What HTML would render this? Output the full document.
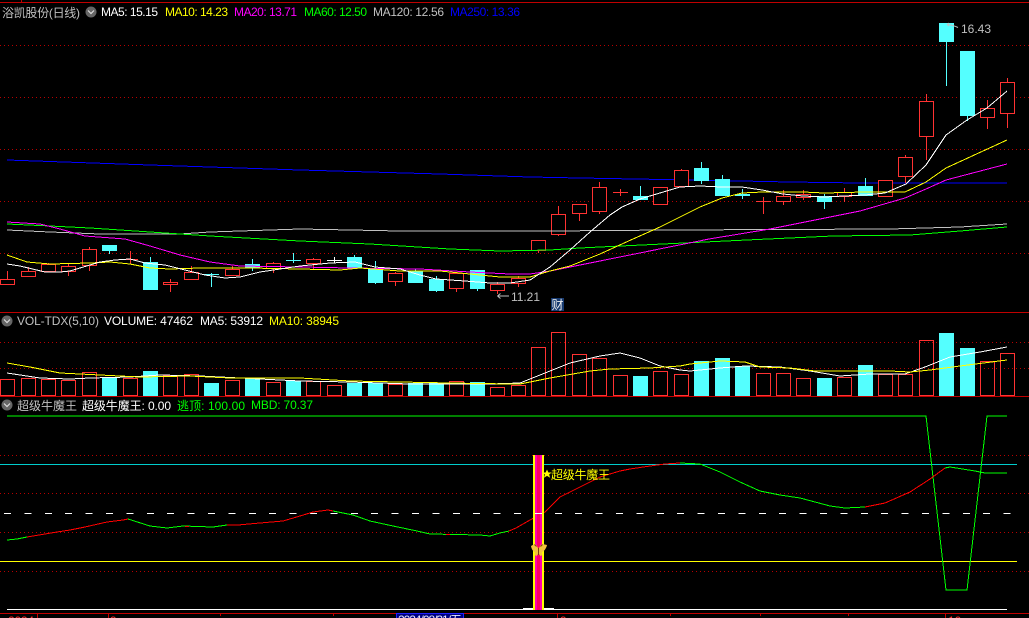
<!DOCTYPE html>
<html><head><meta charset="utf-8"><title>K</title>
<style>
html,body{margin:0;padding:0;background:#000;width:1029px;height:618px;overflow:hidden}
svg{position:absolute;left:0;top:0;display:block}
text{font-family:"Liberation Sans","WenQuanYi Zen Hei","Noto Sans CJK SC",sans-serif;font-size:12px}
</style></head><body>
<svg width="1029" height="618" viewBox="0 0 1029 618" xmlns="http://www.w3.org/2000/svg">
<rect width="1029" height="618" fill="#000"/>
<g shape-rendering="crispEdges" fill="none">
<!-- frame -->
<path d="M0 2.5H1029M21.5 0V2M0 312.5H1029M0 396.5H1029M0 613.5H1029" stroke="#c00000"/>
<path d="M37.5 613V618M108.5 613V618M557.5 613V618M945.5 613V618M220.5 613V616M333.5 613V616M670.5 613V616M760.5 613V616M848.5 613V616" stroke="#c00000"/>
<path d="M0 45.5H1029M0 97.5H1029M0 149.5H1029M0 201.5H1029M0 253.5H1029M0 342.5H1029M0 368.5H1029M0 455.5H1029M0 493.5H1029M0 532.5H1029M0 571.5H1029" stroke="#b80000" stroke-dasharray="1 3"/>
<!-- blue MA250 -->
<polyline stroke="#0000ff" points="7,160 150,165 300,170 440,174 530,177 580,178 690,180 790,182 860,183 1007,183"/>
<!-- red wicks -->
<path stroke="#ff3232" d="M7.5 271V285M28.5 267V277M48.5 263V272M68.5 263V276M89.5 247V271M130.5 251V264M170.5 279V292M191.5 266V280M232.5 266V276M273.5 262V273M313.5 258V269M395.5 272V286M456.5 273V292M497.5 282V294M518.5 276V287M538.5 240V253M558.5 206V236M579.5 204V221M599.5 182V214M620.5 189V196M660.5 187V205M681.5 169V187M763.5 197V214M783.5 190V205M803.5 190V200M844.5 188V202M885.5 180V197M905.5 155V183M926.5 94V160M987.5 100V129M1007.5 78V128"/>
<path stroke="#ff3232" d="M123 259.5H138M163 282.5H178M613 192.5H628M756 201.5H771"/>
<!-- cyan wicks -->
<path stroke="#54ffff" d="M109.5 245V254M150.5 257V290M211.5 273V287M252.5 259V271M293.5 253V263M354.5 255V268M375.5 261V284M415.5 269V283M436.5 276V292M477.5 270V291M640.5 186V200M701.5 162V184M722.5 175V196M742.5 189V199M824.5 194V209M865.5 178V196M946.5 23V86M967.5 51V121"/>
<path stroke="#54ffff" d="M204 274.5H219M286 260.5H301M735 194.5H750"/>
<path stroke="#ffffff" d="M327 260.5H342M334.5 257V263"/>
<!-- red bodies -->
<g stroke="#ff3232" fill="#000">
<rect x="0.5" y="279.5" width="14" height="5"/><rect x="21.5" y="271.5" width="14" height="5"/><rect x="41.5" y="264.5" width="14" height="7"/><rect x="61.5" y="266.5" width="14" height="5"/><rect x="82.5" y="249.5" width="14" height="16"/><rect x="163.5" y="282.5" width="14" height="2"/><rect x="184.5" y="272.5" width="14" height="7"/><rect x="225.5" y="269.5" width="14" height="6"/><rect x="266.5" y="263.5" width="14" height="5"/><rect x="306.5" y="259.5" width="14" height="4"/><rect x="388.5" y="273.5" width="14" height="8"/><rect x="449.5" y="273.5" width="14" height="15"/><rect x="490.5" y="284.5" width="14" height="6"/><rect x="511.5" y="278.5" width="14" height="5"/><rect x="531.5" y="240.5" width="14" height="10"/><rect x="551.5" y="214.5" width="14" height="20"/><rect x="572.5" y="204.5" width="14" height="9"/><rect x="592.5" y="187.5" width="14" height="24"/><rect x="653.5" y="187.5" width="14" height="17"/><rect x="674.5" y="170.5" width="14" height="16"/><rect x="776.5" y="196.5" width="14" height="5"/><rect x="796.5" y="194.5" width="14" height="3"/><rect x="837.5" y="192.5" width="14" height="4"/><rect x="878.5" y="180.5" width="14" height="16"/><rect x="898.5" y="157.5" width="14" height="19"/><rect x="919.5" y="101.5" width="14" height="35"/><rect x="980.5" y="108.5" width="14" height="9"/><rect x="1000.5" y="82.5" width="14" height="31"/>
</g>
<!-- cyan bodies -->
<g fill="#54ffff">
<rect x="102" y="245" width="15" height="6"/><rect x="143" y="262" width="15" height="28"/><rect x="245" y="264" width="15" height="4"/><rect x="347" y="257" width="15" height="11"/><rect x="368" y="269" width="15" height="14"/><rect x="408" y="271" width="15" height="12"/><rect x="429" y="279" width="15" height="12"/><rect x="470" y="270" width="15" height="19"/><rect x="633" y="196" width="15" height="4"/><rect x="694" y="168" width="15" height="13"/><rect x="715" y="179" width="15" height="17"/><rect x="735" y="194" width="15" height="2"/><rect x="817" y="196" width="15" height="6"/><rect x="858" y="186" width="15" height="10"/><rect x="939" y="23" width="15" height="19"/><rect x="960" y="51" width="15" height="65"/>
</g>
<!-- MAs -->
<polyline stroke="#c0c0c0" points="7,230 50,232 100,234 150,234 180,234 210,232 300,229 400,231 510,231 550,231 670,230 890,229 960,227 1007,224"/>
<polyline stroke="#00ff00" points="7,224 50,226 90,228 150,232 210,236 300,241 370,244 450,249 500,251 550,250 580,248 600,247 768,239 833,236 910,235 960,231 1007,227"/>
<polyline stroke="#ff00ff" points="7,222 40,224 60,229 85,236 125,239 150,246 180,255 210,262 240,266 300,267 350,268 420,269 470,272 510,274 530,274 550,271 600,261 709,239 770,229 860,211 905,198 926,189 946,180 1007,164"/>
<polyline stroke="#ffff00" points="7,255 27,262 50,264 90,263 110,262 130,264 150,268 170,269 200,268 250,268 300,269 340,270 360,268 400,271 440,271 470,274 500,277 530,277 550,271 570,266 600,254 633,239 660,227 700,207 722,198 742,193 763,192 803,192 824,193 865,192 905,192 926,182 946,168 1007,140"/>
<polyline stroke="#ffffff" points="7,264 20,266 45,272 60,272 70,271 90,265 100,262 115,260 130,259 145,263 165,265 185,270 205,275 225,278 240,277 260,272 280,269 300,266 330,263 355,262 375,267 400,269 420,275 436,279 465,281 490,283 510,283 530,280 550,267 570,250 590,232 610,215 622,207 640,199 660,193 680,187 700,186 722,187 742,187 762,190 783,194 803,196 824,197 844,196 865,195 885,193 906,184 926,165 946,135 967,120 987,108 1007,91"/>
<!-- Volume bars -->
<g stroke="#ff3232">
<rect x="0.5" y="379.5" width="14" height="16"/><rect x="21.5" y="378.5" width="14" height="17"/><rect x="41.5" y="379.5" width="14" height="16"/><rect x="61.5" y="380.5" width="14" height="15"/><rect x="82.5" y="372.5" width="14" height="23"/><rect x="123.5" y="378.5" width="14" height="17"/><rect x="163.5" y="375.5" width="14" height="20"/><rect x="184.5" y="374.5" width="14" height="21"/><rect x="225.5" y="380.5" width="14" height="15"/><rect x="266.5" y="382.5" width="14" height="13"/><rect x="306.5" y="381.5" width="14" height="14"/><rect x="327.5" y="385.5" width="14" height="10"/><rect x="388.5" y="384.5" width="14" height="11"/><rect x="449.5" y="381.5" width="14" height="14"/><rect x="490.5" y="387.5" width="14" height="8"/><rect x="511.5" y="385.5" width="14" height="10"/><rect x="531.5" y="347.5" width="14" height="48"/><rect x="551.5" y="332.5" width="14" height="63"/><rect x="572.5" y="354.5" width="14" height="41"/><rect x="592.5" y="358.5" width="14" height="37"/><rect x="613.5" y="375.5" width="14" height="20"/><rect x="653.5" y="371.5" width="14" height="24"/><rect x="674.5" y="374.5" width="14" height="21"/><rect x="756.5" y="373.5" width="14" height="22"/><rect x="776.5" y="373.5" width="14" height="22"/><rect x="796.5" y="378.5" width="14" height="17"/><rect x="837.5" y="377.5" width="14" height="18"/><rect x="878.5" y="374.5" width="14" height="21"/><rect x="898.5" y="374.5" width="14" height="21"/><rect x="919.5" y="340.5" width="14" height="55"/><rect x="980.5" y="361.5" width="14" height="34"/><rect x="1000.5" y="353.5" width="14" height="42"/>
</g>
<g fill="#54ffff">
<rect x="102" y="377" width="15" height="19"/><rect x="143" y="371" width="15" height="25"/><rect x="204" y="383" width="15" height="13"/><rect x="245" y="378" width="15" height="18"/><rect x="286" y="381" width="15" height="15"/><rect x="347" y="383" width="15" height="13"/><rect x="368" y="383" width="15" height="13"/><rect x="408" y="383" width="15" height="13"/><rect x="429" y="383" width="15" height="13"/><rect x="470" y="382" width="15" height="14"/><rect x="633" y="376" width="15" height="20"/><rect x="694" y="361" width="15" height="35"/><rect x="715" y="358" width="15" height="38"/><rect x="735" y="366" width="15" height="30"/><rect x="817" y="378" width="15" height="18"/><rect x="858" y="365" width="15" height="31"/><rect x="939" y="333" width="15" height="63"/><rect x="960" y="348" width="15" height="48"/>
</g>
<polyline stroke="#ffffff" points="7,373 40,378 70,379 90,378 130,377 160,375 200,376 220,377 260,379 300,381 350,382 410,384 490,384 520,383 545,373 570,363 600,356 620,353 640,358 660,366 680,370 690,371 720,368 745,366 780,367 810,371 840,376 870,374 905,374 925,367 950,357 980,352 1007,347"/>
<polyline stroke="#ffff00" points="7,363 30,367 60,373 100,375 140,377 190,376 230,378 300,378 350,381 400,382 450,383 510,384 520,384 550,378 590,371 610,369 650,368 680,366 690,364 720,361 745,362 760,367 790,368 815,371 860,371 890,371 910,372 930,370 960,366 1007,360"/>
<!-- indicator lines -->
<path d="M0 464.5H1017" stroke="#00cccc"/>
<path d="M0 561.5H1017" stroke="#ffff00"/>
<path d="M4 513.5H1012" stroke="#ffffff" stroke-dasharray="7 13.4"/>
<path d="M7 609.5H1007" stroke="#ffffff"/>
<path d="M523 608.5H554" stroke="#ffffff"/>
<polyline stroke="#00ff00" points="7,416 926,416 946,590 967,590 987,416 1007,416"/>
<g stroke="#00ff00">
<polyline points="7,540 17,539 27,537"/>
<polyline points="128,519 150,526 167,528 183,526 213,527 227,525"/>
<polyline points="333,511 353,515 370,521 393,526 417,531 430,534 480,535 490,536 500,533 509,531"/>
<polyline points="680,463 700,464 720,472 740,482 760,491 780,495 800,498 830,506 845,508 865,507"/>
<polyline points="945,468 950,467 975,471 985,473 1007,473"/>
</g>
<g stroke="#ff0000">
<polyline points="27,537 33,536 57,532 70,530 85,527 107,522 123,520 128,519"/>
<polyline points="227,525 238,525 260,523 283,521 300,516 313,512 328,510 333,511"/>
<polyline points="509,531 516,528 530,520 545,512 560,497 580,487 600,477 620,471 630,469 650,466 665,464 680,463"/>
<polyline points="865,507 885,503 910,492 930,479 945,468"/>
<path d="M185 526.5H189M446 534.5H450"/>
</g>
<!-- signal bar -->
<rect x="533" y="455" width="11" height="155" fill="#ffff00"/>
<rect x="535" y="455" width="7" height="155" fill="#ff00b0"/>
<rect x="537" y="455" width="3" height="155" fill="#ff0060"/>
<path d="M535 513.5H542" stroke="#fff"/>
<!-- date box -->
<rect x="396.5" y="613.5" width="67" height="8" fill="#000080" stroke="#2020ff"/>
</g>
<!-- butterfly -->
<g>
<path d="M538.5 549 C537 546 536 544 534.5 544 L531 546 C531.5 549 533 551.5 535 552 C534.5 554 535 556 536.5 556 L538.5 553.5 L540.5 556 C542 556 542.5 554 542 552 C544 551.5 546.5 548 547 545 L542.5 544 C541 544 540 546 538.5 549Z" fill="#f2c23c"/>
<path d="M534.5 544.5l2 2M542.5 544.5l-2 2M538.5 548V555" stroke="#7a3c10" stroke-width="1" fill="none"/>
</g>
<!-- star -->
<path d="M547 469.5l1.4 3h3.2l-2.5 2 1 3.2-3.1-1.8-3.1 1.8 1-3.2-2.5-2h3.2z" fill="#ffff00"/>
<text x="551" y="479" fill="#ffff00" textLength="59" lengthAdjust="spacing">超级牛魔王</text>
<!-- header row 1 -->
<text x="2" y="17" fill="#c0c0c0" textLength="78" lengthAdjust="spacing">浴凯股份(日线)</text>
<circle cx="91" cy="12" r="5.5" fill="#666"/><path d="M88 10.5l3 3 3-3" fill="none" stroke="#ddd" stroke-width="1.2"/>
<text x="101" y="16" fill="#fff" textLength="57" lengthAdjust="spacing">MA5: 15.15</text>
<text x="165" y="16" fill="#ffff00" textLength="63" lengthAdjust="spacing">MA10: 14.23</text>
<text x="234" y="16" fill="#ff00ff" textLength="63" lengthAdjust="spacing">MA20: 13.71</text>
<text x="304" y="16" fill="#00ff00" textLength="63" lengthAdjust="spacing">MA60: 12.50</text>
<text x="373" y="16" fill="#c0c0c0" textLength="71" lengthAdjust="spacing">MA120: 12.56</text>
<text x="450" y="16" fill="#0000ff" textLength="70" lengthAdjust="spacing">MA250: 13.36</text>
<!-- price labels -->
<path d="M947 24.5l2-1.5M947 24.5l2 1.5M947 24.5C952 25 955 26 958 27.5" fill="none" stroke="#c0c0c0"/>
<text x="961" y="33" fill="#c0c0c0" textLength="30" lengthAdjust="spacing">16.43</text>
<path d="M497.5 296H509M497.5 296l3-2.5M497.5 296l3 2.5" fill="none" stroke="#c0c0c0"/>
<text x="511" y="301" fill="#c0c0c0" textLength="29" lengthAdjust="spacing">11.21</text>
<rect x="551" y="298" width="13" height="13" fill="#173a70"/>
<text x="551.5" y="309" fill="#f0f0f0">财</text>
<!-- header row 2 -->
<circle cx="7" cy="321" r="5.5" fill="#666"/><path d="M4 319.5l3 3 3-3" fill="none" stroke="#ddd" stroke-width="1.2"/>
<text x="17" y="325" fill="#c0c0c0" textLength="82" lengthAdjust="spacing">VOL-TDX(5,10)</text>
<text x="104" y="325" fill="#fff" textLength="89" lengthAdjust="spacing">VOLUME: 47462</text>
<text x="200" y="325" fill="#fff" textLength="63" lengthAdjust="spacing">MA5: 53912</text>
<text x="269" y="325" fill="#ffff00" textLength="70" lengthAdjust="spacing">MA10: 38945</text>
<!-- header row 3 -->
<circle cx="7" cy="405" r="5.5" fill="#666"/><path d="M4 403.5l3 3 3-3" fill="none" stroke="#ddd" stroke-width="1.2"/>
<text x="17" y="410" fill="#c0c0c0" textLength="60" lengthAdjust="spacing">超级牛魔王</text>
<text x="82" y="410" fill="#fff" textLength="89" lengthAdjust="spacing">超级牛魔王: 0.00</text>
<text x="177" y="410" fill="#00ff00" textLength="68" lengthAdjust="spacing">逃顶: 100.00</text>
<text x="251" y="409" fill="#00ff00" textLength="62" lengthAdjust="spacing">MBD: 70.37</text>
<!-- bottom axis -->
<text x="8" y="625" fill="#ff3232" textLength="26" lengthAdjust="spacing">2024</text>
<text x="110" y="625" fill="#ff3232">9</text>
<text x="560" y="625" fill="#ff3232">9</text>
<text x="948" y="625" fill="#ff3232">10</text>
<text x="398" y="624" fill="#e8e8ff" textLength="64" lengthAdjust="spacing">2024/08/31/五</text>
</svg>
</body></html>
